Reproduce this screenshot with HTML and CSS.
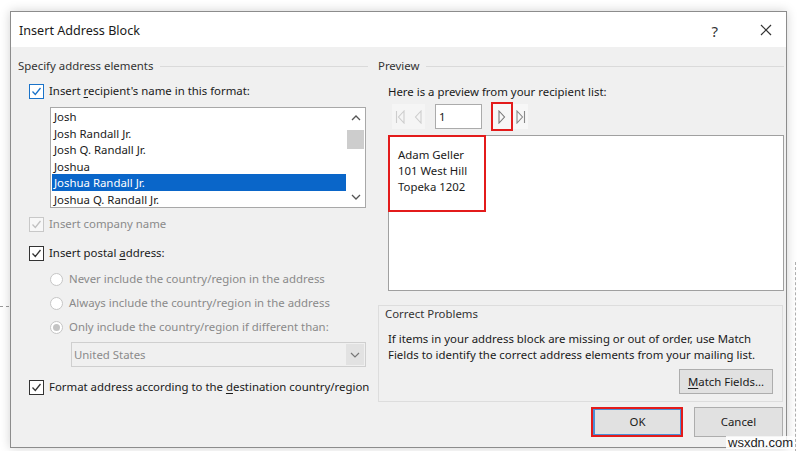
FILE: index.html
```html
<!DOCTYPE html>
<html lang="en">

<head>
    <meta charset="UTF-8">
    <meta name="viewport" content="width=device-width, initial-scale=1.0">
    <title>Insert Address Block</title>

    <link rel="stylesheet" href="styles.css">
</head>

<body>
    <div class="doc-line-h"></div>
    <div class="doc-line-v"></div>

    <div class="dialog">
        <div class="titlebar">
            <span class="title">Insert Address Block</span>
            <span class="help">?</span>
            <svg class="close" width="12" height="12" viewBox="0 0 12 12">
                <line x1="1" y1="1" x2="11" y2="11" />
                <line x1="11" y1="1" x2="1" y2="11" />
            </svg>
        </div>

        <div class="content">
            <div class="col-left">
                <div class="group-head">Specify address elements</div>

                <div class="row check-row">
                    <svg class="cb blue" width="15" height="15" viewBox="0 0 15 15">
                        <rect x="0.5" y="0.5" width="14" height="14" />
                        <path d="M3.5 7.5 L6.3 10.5 L11.5 4" />
                    </svg>
                    <span>Insert <u>r</u>ecipient's name in this format:</span>
                </div>

                <div class="listbox">
                    <div class="items">
                        <div class="item">Josh</div>
                        <div class="item">Josh Randall Jr.</div>
                        <div class="item">Josh Q. Randall Jr.</div>
                        <div class="item">Joshua</div>
                        <div class="item selected">Joshua Randall Jr.</div>
                        <div class="item">Joshua Q. Randall Jr.</div>
                    </div>
                    <div class="scrollbar">
                        <svg width="10" height="6" viewBox="0 0 10 6"><path d="M1 5 L5 1 L9 5" /></svg>
                        <div class="thumb"></div>
                        <svg class="down" width="10" height="6" viewBox="0 0 10 6"><path d="M1 1 L5 5 L9 1" /></svg>
                    </div>
                </div>

                <div class="row check-row company disabled">
                    <svg class="cb grey" width="15" height="15" viewBox="0 0 15 15">
                        <rect x="0.5" y="0.5" width="14" height="14" />
                        <path d="M3.5 7.5 L6.3 10.5 L11.5 4" />
                    </svg>
                    <span>Insert company name</span>
                </div>

                <div class="row check-row postal">
                    <svg class="cb" width="15" height="15" viewBox="0 0 15 15">
                        <rect x="0.5" y="0.5" width="14" height="14" />
                        <path d="M3.5 7.5 L6.3 10.5 L11.5 4" />
                    </svg>
                    <span>Insert postal <u>a</u>ddress:</span>
                </div>

                <div class="row radio-row first disabled">
                    <span class="radio"></span>
                    <span>Never include the country/region in the address</span>
                </div>
                <div class="row radio-row disabled">
                    <span class="radio"></span>
                    <span>Always include the country/region in the address</span>
                </div>
                <div class="row radio-row disabled">
                    <span class="radio on"></span>
                    <span>Only include the country/region if different than:</span>
                </div>

                <div class="select">
                    <span class="select-text">United States</span>
                    <span class="select-btn">
                        <svg width="10" height="6" viewBox="0 0 10 6"><path d="M1 1 L5 5 L9 1" /></svg>
                    </span>
                </div>

                <div class="row check-row format">
                    <svg class="cb" width="15" height="15" viewBox="0 0 15 15">
                        <rect x="0.5" y="0.5" width="14" height="14" />
                        <path d="M3.5 7.5 L6.3 10.5 L11.5 4" />
                    </svg>
                    <span>Format address according to the <u>d</u>estination country/region</span>
                </div>
            </div>

            <div class="col-right">
                <div class="group-head">Preview</div>
                <div class="row preview-label">Here is a preview from your recipient list:</div>

                <div class="nav">
                    <div class="nav-off">
                        <svg width="10" height="14" viewBox="0 0 10 14">
                            <line x1="1.5" y1="1" x2="1.5" y2="13" />
                            <path d="M9 1 L3.5 7 L9 13 Z" />
                        </svg>
                        <svg width="8" height="14" viewBox="0 0 8 14">
                            <path d="M7 1 L1.5 7 L7 13 Z" />
                        </svg>
                    </div>
                    <div class="nav-input">1</div>
                    <div class="nav-next">
                        <svg width="8" height="14" viewBox="0 0 8 14">
                            <path d="M1 1 L6.5 7 L1 13 Z" />
                        </svg>
                    </div>
                    <div class="nav-last">
                        <svg width="10" height="14" viewBox="0 0 10 14">
                            <path d="M1 1 L6.5 7 L1 13 Z" />
                            <line x1="8.5" y1="1" x2="8.5" y2="13" />
                        </svg>
                    </div>
                </div>

                <div class="preview">
                    <div class="address">
                        <div>Adam Geller</div>
                        <div>101 West Hill</div>
                        <div>Topeka 1202</div>
                    </div>
                </div>

                <div class="problems">
                    <div class="problems-head">Correct Problems</div>
                    <p class="problems-text">If items in your address block are missing or out of order, use Match<br>Fields to identify the correct address elements from your mailing list.</p>
                    <div class="btn-line">
                        <span class="btn match"><u>M</u>atch Fields...</span>
                    </div>
                </div>

                <div class="buttons">
                    <span class="ok-mark"><span class="btn ok">OK</span></span>
                    <span class="btn cancel">Cancel</span>
                </div>
            </div>
        </div>
    </div>

    <div class="watermark">wsxdn.com</div>
</body>
</html>
```

FILE: styles.css
```css
body {
    margin: 0;
    background-color: #ffffff;
    font-family: "Noto Sans", "Open Sans", sans-serif;
    font-size: 11.4px;
    color: #1a1a1a;
    width: 800px;
    height: 451px;
    overflow: hidden;
    position: relative;
}

u { text-decoration-thickness: 1px; text-underline-offset: 2px; }

.doc-line-h {
    position: absolute;
    left: 0;
    top: 306px;
    width: 9px;
    border-top: 1px dashed #9a9a9a;
}
.doc-line-v {
    position: absolute;
    left: 795px;
    top: 262px;
    height: 190px;
    border-left: 1px dashed #b0b0b0;
}

.dialog {
    margin: 11px 0 0 10px;
    width: 775px;
    height: 435px;
    border: 1px solid #8c8c8c;
    background-color: #f0f0f0;
    box-shadow: 0 0 10px rgba(0, 0, 0, 0.18);
    position: relative;
}

.titlebar {
    height: 35px;
    background-color: #ffffff;
    display: flex;
    align-items: center;
    padding-left: 8px;
}
.title { font-size: 12.6px; color: #1a1a1a; flex: 1; padding-top: 2px; }
.help { font-size: 15px; color: #333; margin-right: 42px; padding-top: 2px; }
.close { margin-right: 14px; stroke: #333; stroke-width: 1.2; }

.content {
    display: flex;
    padding: 10px 0 0 7px;
}
.col-left { width: 350px; }
.col-right { width: 406px; margin-left: 10px; }

.group-head {
    height: 18px;
    line-height: 18px;
    display: flex;
    align-items: center;
    color: #333;
}
.group-head::after {
    content: "";
    flex: 1;
    border-top: 1px solid #dadada;
    margin-left: 7px;
}

.row {
    height: 18px;
    line-height: 18px;
    display: flex;
    align-items: center;
    white-space: nowrap;
}
.row svg, .row .radio { flex-shrink: 0; }
.check-row { margin-top: 7px; padding-left: 11px; }
.check-row span { margin-left: 5px; }
.disabled { color: #8a8a8a; }

.cb rect { fill: #ffffff; stroke: #333333; }
.cb path { fill: none; stroke: #333333; stroke-width: 1.3; }
.cb.blue rect, .cb.blue path { stroke: #1a73c9; }
.cb.grey rect { stroke: #c8c8c8; fill: #f7f7f7; }
.cb.grey path { stroke: #c0c0c0; }

.listbox {
    margin: 7px 0 0 32px;
    width: 314px;
    height: 99px;
    border: 1px solid #a8a8a8;
    background-color: #ffffff;
    display: flex;
}
.items { flex: 1; padding-left: 1px; }
.item { height: 16.5px; line-height: 17px; padding-left: 2px; color: #1a1a1a; }
.item.selected { background-color: #0a66c9; color: #ffffff; }

.scrollbar {
    width: 19px;
    display: flex;
    flex-direction: column;
    align-items: center;
}
.scrollbar svg { margin-top: 7px; fill: none; stroke: #555; stroke-width: 1.3; }
.scrollbar .down { margin-top: auto; margin-bottom: 7px; }
.thumb { width: 17px; height: 19px; background-color: #cdcdcd; margin-top: 9px; }

.company { margin-top: 7px; }
.postal { margin-top: 11px; }

.radio-row { margin-top: 6px; padding-left: 32px; }
.radio-row.first { margin-top: 8px; }
.radio-row span:last-child { margin-left: 6px; }
.radio {
    width: 11px;
    height: 11px;
    border: 1px solid #c6c6c6;
    border-radius: 50%;
    background-color: #ffffff;
    display: flex;
    align-items: center;
    justify-content: center;
}
.radio.on::after {
    content: "";
    width: 7px;
    height: 7px;
    border-radius: 50%;
    background-color: #c4c4c4;
}

.select {
    margin: 6px 0 0 53px;
    width: 293px;
    height: 23px;
    border: 1px solid #cfcfcf;
    background-color: #f0f0f0;
    display: flex;
    align-items: center;
}
.select-text { flex: 1; padding-left: 2px; color: #8a8a8a; }
.select-btn {
    width: 18px;
    height: 21px;
    margin-right: 1px;
    background-color: #e2e2e2;
    display: flex;
    align-items: center;
    justify-content: center;
}
.select-btn svg { fill: none; stroke: #777; stroke-width: 1.2; }

.format { margin-top: 11px; }

.preview-label { margin-top: 8px; padding-left: 10px; }

.nav {
    margin: 2px 0 0 14px;
    height: 27px;
    display: flex;
    align-items: center;
}
.nav svg { fill: none; stroke-width: 1.1; }
.nav-off {
    width: 33px;
    height: 25px;
    background-color: #f5f5f5;
    display: flex;
    align-items: center;
    justify-content: center;
    gap: 9px;
    stroke: #cdcdcd;
}
.nav-input {
    margin-left: 10px;
    width: 42px;
    height: 23px;
    line-height: 23px;
    border: 1px solid #ababab;
    background-color: #ffffff;
    padding-left: 3px;
}
.nav-next {
    margin-left: 9px;
    width: 18px;
    height: 25px;
    border: 2px solid #e31b1b;
    display: flex;
    align-items: center;
    justify-content: center;
    background-color: #f7f7f7;
    stroke: #777;
}
.nav-last {
    width: 15px;
    height: 25px;
    display: flex;
    align-items: center;
    justify-content: center;
    background-color: #f7f7f7;
    stroke: #888;
}

.preview {
    margin: 5px 0 0 10px;
    height: 154px;
    border: 1px solid #a0a0a0;
    background-color: #ffffff;
}
.address {
    margin: -1px 0 0 -1px;
    border: 2px solid #e31b1b;
    padding: 10px 0 0 8px;
    box-sizing: border-box;
    width: 98px;
    height: 77px;
    line-height: 16px;
    color: #1a1a1a;
}

.problems {
    margin-top: 14px;
    width: 403px;
    height: 95px;
    border: 1px solid #dddddd;
}
.problems-head { padding-left: 6px; height: 16px; line-height: 16px; color: #333; }
.problems-text { margin: 9px 0 0 9px; line-height: 16px; }
.btn-line { display: flex; justify-content: flex-end; margin: 6px 9px 0 0; }

.btn {
    height: 23px;
    line-height: 23px;
    border: 1px solid #adadad;
    background-color: #e1e1e1;
    text-align: center;
    display: inline-block;
}
.match { width: 92px; }

.buttons {
    margin-top: 5px;
    display: flex;
    justify-content: flex-end;
    align-items: center;
    padding-right: 1px;
}
.ok-mark {
    width: 88px;
    height: 26px;
    border: 2px solid #e31b1b;
    display: flex;
}
.ok {
    flex: 1;
    height: 24px;
    line-height: 24px;
    border: 1px solid #4a8fd6;
    border-left-width: 2px;
}
.cancel { width: 87px; height: 28px; line-height: 28px; margin-left: 11px; }

.watermark {
    position: absolute;
    left: 726px;
    top: 436px;
    padding: 0 2px;
    background-color: rgba(255, 255, 255, 0.85);
    font-family: "Liberation Sans", Arial, sans-serif;
    font-size: 13px;
    line-height: 13px;
    color: #222;
}
```
